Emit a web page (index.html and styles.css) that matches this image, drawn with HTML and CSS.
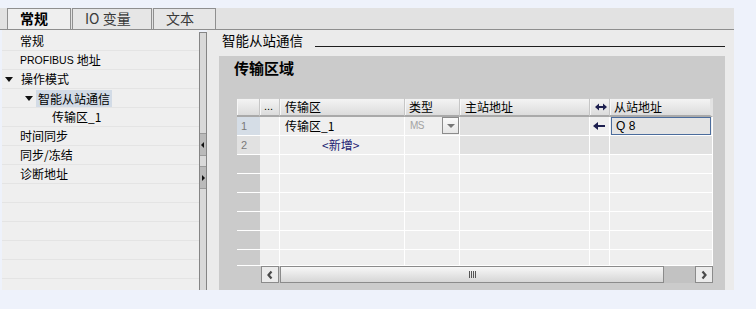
FILE: index.html
```html
<!DOCTYPE html>
<html>
<head>
<meta charset="utf-8">
<link rel="stylesheet" href="styles.css">
</head>
<body>
<div class="app">
  <div class="tabbar">
    <div class="tab active">常规</div>
    <div class="tab tab-io">IO 变量</div>
    <div class="tab tab-text">文本</div>
  </div>
  <div class="main">
    <div class="tree">
      <div class="node l1">常规</div>
      <div class="node l1 latin">PROFIBUS <span class="cjk">地址</span></div>
      <div class="node l0"><span class="tri"></span>操作模式</div>
      <div class="node l1b"><span class="tri"></span><span class="sel">智能从站通信</span></div>
      <div class="node l2">传输区_1</div>
      <div class="node l1">时间同步</div>
      <div class="node l1">同步/冻结</div>
      <div class="node l1">诊断地址</div>
      <div class="node"></div>
      <div class="node"></div>
      <div class="node"></div>
      <div class="node"></div>
      <div class="node"></div>
      <div class="node"></div>
    </div>
    <div class="splitter">
      <div class="sp-top"></div>
      <div class="sp-btn"><span class="arr-left"></span></div>
      <div class="sp-gap"></div>
      <div class="sp-btn"><span class="arr-right"></span></div>
      <div class="sp-rest"></div>
    </div>
    <div class="content">
      <div class="heading"><span class="heading-text">智能从站通信</span><span class="rule"></span></div>
      <div class="section">
        <div class="section-title">传输区域</div>
        <div class="table">
          <div class="row head">
            <div class="c"></div>
            <div class="c dots">...</div>
            <div class="c">传输区</div>
            <div class="c">类型</div>
            <div class="c">主站地址</div>
            <div class="c arrowcell">
              <svg width="12" height="8" viewBox="0 0 12 8"><path d="M0 4 L4 0.5 L4 3 L8 3 L8 0.5 L12 4 L8 7.5 L8 5 L4 5 L4 7.5 Z" fill="#1d1f4f"/></svg>
            </div>
            <div class="c">从站地址</div>
          </div>
          <div class="row">
            <div class="c num sel1">1</div>
            <div class="c"></div>
            <div class="c">传输区_1</div>
            <div class="c type"><span class="ms">MS</span><span class="dd"><span class="ddtri"></span></span></div>
            <div class="c dark"></div>
            <div class="c arrowcell">
              <svg width="12" height="8" viewBox="0 0 12 8"><path d="M0 4 L5 0 L5 3 L12 3 L12 5 L5 5 L5 8 Z" fill="#1d1f4f"/></svg>
            </div>
            <div class="c slave"><span class="input">Q 8</span></div>
          </div>
          <div class="row">
            <div class="c num sel2">2</div>
            <div class="c"></div>
            <div class="c add">&lt;新增&gt;</div>
            <div class="c"></div>
            <div class="c dark"></div>
            <div class="c dark"></div>
            <div class="c dark"></div>
          </div>
          <div class="row"><div class="c num"></div><div class="c"></div><div class="c"></div><div class="c"></div><div class="c"></div><div class="c"></div><div class="c"></div></div>
          <div class="row"><div class="c num"></div><div class="c"></div><div class="c"></div><div class="c"></div><div class="c"></div><div class="c"></div><div class="c"></div></div>
          <div class="row"><div class="c num"></div><div class="c"></div><div class="c"></div><div class="c"></div><div class="c"></div><div class="c"></div><div class="c"></div></div>
          <div class="row"><div class="c num"></div><div class="c"></div><div class="c"></div><div class="c"></div><div class="c"></div><div class="c"></div><div class="c"></div></div>
          <div class="row"><div class="c num"></div><div class="c"></div><div class="c"></div><div class="c"></div><div class="c"></div><div class="c"></div><div class="c"></div></div>
          <div class="row last"><div class="c num"></div><div class="c"></div><div class="c"></div><div class="c"></div><div class="c"></div><div class="c"></div><div class="c"></div></div>
        </div>
        <div class="hscroll">
          <div class="sb-btn"><svg width="8" height="10" viewBox="0 0 8 10"><path d="M5.5 1.5 L2.5 5 L5.5 8.5" fill="none" stroke="#4a4a4a" stroke-width="2.2"/></svg></div>
          <div class="sb-thumb"><span class="grip"></span></div>
          <div class="sb-track"></div>
          <div class="sb-btn"><svg width="8" height="10" viewBox="0 0 8 10"><path d="M2.5 1.5 L5.5 5 L2.5 8.5" fill="none" stroke="#4a4a4a" stroke-width="2.2"/></svg></div>
        </div>
      </div>
    </div>
  </div>
</div>
</body>
</html>
```

FILE: styles.css
```css
html, body {
  margin: 0;
  padding: 0;
}
body {
  background: #eef2fb;
  font-family: "Noto Sans CJK SC", "Liberation Sans", sans-serif;
  font-size: 12px;
  color: #000;
  width: 756px;
  height: 309px;
  overflow: hidden;
}
.app {
  padding-top: 8px;
  width: 734px;
}
.tabbar {
  height: 21px;
  background: #e2e2e2;
  border-bottom: 1px solid #8e8e8e;
  display: flex;
  padding-left: 7px;
}
.tab {
  box-sizing: border-box;
  height: 21px;
  width: 64px;
  border: 1px solid #8f8f8f;
  border-bottom: none;
  background: #e6e6e6;
  font-size: 14px;
  line-height: 19px;
  padding-left: 12px;
  color: #3a3a3a;
  margin-right: 1px;
}
.tab.active {
  background: #efefef;
  font-weight: bold;
  color: #000;
  margin-right: 1px;
}
.tab-io {
  width: 80px;
  font-family: "Noto Sans CJK SC", sans-serif;
}
.tab-text {
  width: 63px;
}
.main {
  display: flex;
  height: 260px;
}
.tree {
  width: 197px;
  margin-left: 2px;
  background: #efefef;
  padding-top: 2px;
  overflow: hidden;
}
.node {
  height: 18px;
  border-bottom: 1px solid #e4e4e4;
  display: flex;
  align-items: center;
  white-space: nowrap;
  line-height: 18px;
}
.l1 { padding-left: 18px; }
.l0 { padding-left: 2px; }
.l1b { padding-left: 22px; }
.l2 { padding-left: 50px; }
.latin {
  font-family: "Liberation Sans", sans-serif;
  font-size: 10.5px;
}
.cjk {
  font-family: "Noto Sans CJK SC", sans-serif;
  font-size: 12px;
  margin-left: 3px;
}
.tri {
  width: 0;
  height: 0;
  border-left: 4px solid transparent;
  border-right: 4px solid transparent;
  border-top: 5px solid #111;
  margin-right: 8px;
  margin-left: 1px;
}
.l1b .tri {
  margin-right: 3px;
}
.sel {
  background: #d2dbe6;
  padding: 0 2px;
  line-height: 17px;
}
.splitter {
  box-sizing: border-box;
  width: 8px;
  margin-top: 2px;
  border-left: 1px solid #858585;
  border-right: 1px solid #858585;
  border-top: 1px solid #858585;
  background: #d9d9d9;
  display: flex;
  flex-direction: column;
}
.sp-top { height: 100px; }
.sp-btn {
  height: 21px;
  background: #bababa;
  border-top: 1px solid #9a9a9a;
  border-bottom: 1px solid #9a9a9a;
  display: flex;
  align-items: center;
  justify-content: center;
}
.sp-gap { height: 10px; }
.sp-rest { flex: 1; }
.arr-left {
  width: 0; height: 0;
  border-top: 3px solid transparent;
  border-bottom: 3px solid transparent;
  border-right: 3px solid #111;
  margin-left: -2px;
}
.arr-right {
  width: 0; height: 0;
  border-top: 3px solid transparent;
  border-bottom: 3px solid transparent;
  border-left: 3px solid #111;
}
.content {
  flex: 1;
  background: #ebebeb;
  padding-left: 12px;
  padding-right: 9px;
  display: flex;
  flex-direction: column;
}
.heading {
  height: 26px;
  display: flex;
  align-items: flex-start;
}
.heading-text {
  font-size: 13.5px;
  line-height: 20px;
  padding-left: 3px;
}
.rule {
  flex: 1;
  height: 1px;
  background: #1e1e1e;
  margin-top: 16px;
  margin-left: 12px;
}
.section {
  flex: 1;
  background: #cbcbcb;
  padding-left: 18px;
}
.section-title {
  height: 24px;
  line-height: 24px;
  font-size: 15px;
  font-weight: bold;
  margin-left: -3px;
  margin-bottom: 18px;
}
.table {
  width: 476px;
}
.row {
  display: grid;
  grid-template-columns: 23px 20px 125px 55px 130px 20px 103px;
  height: 19px;
}
.c {
  box-sizing: border-box;
  height: 19px;
  border-right: 1px solid #fff;
  border-bottom: 1px solid #fff;
  background: #efefef;
  line-height: 18px;
  padding-left: 5px;
  white-space: nowrap;
  overflow: hidden;
}
.c:first-child { border-right: none; }
.row.last, .row.last .c { height: 16px; }
.head .c {
  border-top: 1px solid #cdcdcd;
  border-bottom: 2px solid #a9a9a9;
  border-right: 1px solid #c6c6c6;
  box-shadow: inset 1px 0 #f7f7f7;
  background: linear-gradient(#f4f4f4, #dcdcdc);
  line-height: 15px;
  padding-left: 5px;
}
.head .c:nth-child(4) { padding-left: 4px; }
.head .c:last-child { padding-left: 4px; border-right: 3px solid #e2e2e2; }
.head .dots {
  font-family: "Liberation Sans", sans-serif;
  font-size: 11px;
  padding-left: 4px;
}
.num {
  background: transparent;
  font-family: "Liberation Sans", sans-serif;
  font-size: 11px;
  color: #7a7a7a;
  padding-left: 4px;
}
.num.sel1 { background: #d5dde6; }
.num.sel2 { background: #e1e1e1; }
.dark { background: #e1e1e1; }
.arrowcell {
  padding-left: 3px;
  display: flex;
  align-items: center;
}
.type {
  display: flex;
  align-items: center;
  justify-content: space-between;
  padding-left: 5px;
  padding-right: 0;
  border-right: 1px solid #fff;
}
.ms {
  font-family: "Liberation Sans", sans-serif;
  font-size: 10px;
  color: #a3a3a3;
  letter-spacing: -0.5px;
}
.dd {
  box-sizing: border-box;
  width: 17px;
  height: 17px;
  margin-top: -1px;
  border: 1px solid #8c8c8c;
  background: linear-gradient(#fafafa, #e6e6e6);
  display: flex;
  align-items: center;
  justify-content: center;
}
.ddtri {
  width: 0; height: 0;
  border-left: 4px solid transparent;
  border-right: 4px solid transparent;
  border-top: 4px solid #777;
}
.slave {
  padding: 0 0 0 1px;
  background: #efefef;
}
.input {
  display: block;
  box-sizing: border-box;
  width: 100px;
  height: 18px;
  border: 1px solid #4b6c9c;
  background: #e4e4e4;
  font-family: "Liberation Sans", sans-serif;
  font-size: 12px;
  line-height: 16px;
  padding-left: 4px;
}
.add {
  color: #1c1c72;
  padding-left: 42px;
}
.hscroll {
  display: flex;
  margin-left: 24px;
  width: 452px;
  height: 17px;
}
.sb-btn {
  box-sizing: border-box;
  width: 18px;
  height: 17px;
  border: 1px solid #8b8b8b;
  background: #ebebeb;
  display: flex;
  align-items: center;
  justify-content: center;
}
.sb-thumb {
  box-sizing: border-box;
  width: 384px;
  height: 17px;
  margin-left: 1px;
  border: 1px solid #8b8b8b;
  background: linear-gradient(#f7f7f7, #d6d6d6);
  display: flex;
  align-items: center;
  justify-content: center;
}
.grip {
  width: 7px;
  height: 7px;
  background: repeating-linear-gradient(90deg, #555 0 1px, transparent 1px 2px);
}
.sb-track {
  flex: 1;
  background: #c2c2c2;
}
```
